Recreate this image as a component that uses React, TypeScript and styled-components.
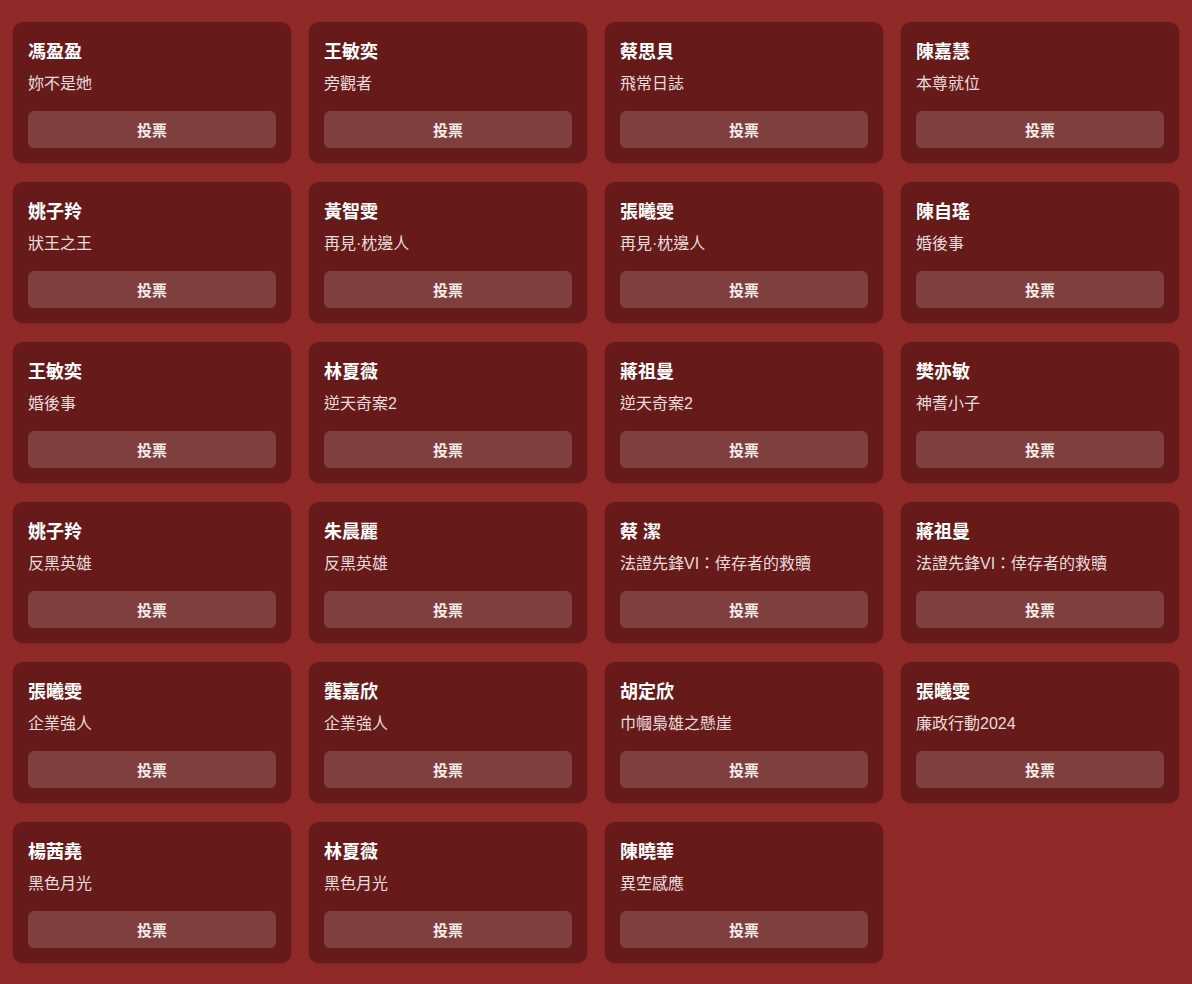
import React, { FC } from 'react';
import styled, { createGlobalStyle } from 'styled-components';

const GlobalStyle = createGlobalStyle`
  html, body {
    margin: 0;
    padding: 0;
    background: #8f2a29;
  }
  body {
    font-family: "Liberation Sans", "Noto Sans CJK TC", sans-serif;
    color: #ffffff;
  }
`;

const Grid = styled.div`
  display: grid;
  grid-template-columns: repeat(4, 278px);
  grid-auto-rows: 141px;
  column-gap: 18px;
  row-gap: 19px;
  padding: 22px 13px 21px;
`;

const Card = styled.div`
  box-sizing: border-box;
  background: #661b1a;
  border-radius: 10px;
  padding: 18px 15px 15px;
  display: flex;
  flex-direction: column;
  box-shadow: 0 1px 3px rgba(0, 0, 0, 0.12);
`;

const Name = styled.h3`
  margin: 0;
  font-size: 18px;
  line-height: 24px;
  font-weight: 700;
  color: #ffffff;
`;

const Work = styled.p`
  margin: 9px 0 0;
  font-size: 16px;
  line-height: 22px;
  color: #eadcdc;
`;

const VoteButton = styled.button`
  margin-top: auto;
  height: 37px;
  flex: none;
  border: none;
  border-radius: 6px;
  background: rgba(255, 255, 255, 0.16);
  color: #f4eaea;
  font-family: inherit;
  font-size: 15px;
  font-weight: 700;
  cursor: pointer;
`;

interface Nominee {
  name: string;
  work: string;
}

const nominees: Nominee[] = [
  { name: '馮盈盈', work: '妳不是她' },
  { name: '王敏奕', work: '旁觀者' },
  { name: '蔡思貝', work: '飛常日誌' },
  { name: '陳嘉慧', work: '本尊就位' },
  { name: '姚子羚', work: '狀王之王' },
  { name: '黃智雯', work: '再見·枕邊人' },
  { name: '張曦雯', work: '再見·枕邊人' },
  { name: '陳自瑤', work: '婚後事' },
  { name: '王敏奕', work: '婚後事' },
  { name: '林夏薇', work: '逆天奇案2' },
  { name: '蔣祖曼', work: '逆天奇案2' },
  { name: '樊亦敏', work: '神耆小子' },
  { name: '姚子羚', work: '反黑英雄' },
  { name: '朱晨麗', work: '反黑英雄' },
  { name: '蔡 潔', work: '法證先鋒VI：倖存者的救贖' },
  { name: '蔣祖曼', work: '法證先鋒VI：倖存者的救贖' },
  { name: '張曦雯', work: '企業強人' },
  { name: '龔嘉欣', work: '企業強人' },
  { name: '胡定欣', work: '巾幗梟雄之懸崖' },
  { name: '張曦雯', work: '廉政行動2024' },
  { name: '楊茜堯', work: '黑色月光' },
  { name: '林夏薇', work: '黑色月光' },
  { name: '陳曉華', work: '異空感應' },
];

const App: FC = () => (
  <>
    <GlobalStyle />
    <Grid>
      {nominees.map((n, i) => (
        <Card key={i}>
          <Name>{n.name}</Name>
          <Work>{n.work}</Work>
          <VoteButton type="button">投票</VoteButton>
        </Card>
      ))}
    </Grid>
  </>
);

export default App;
